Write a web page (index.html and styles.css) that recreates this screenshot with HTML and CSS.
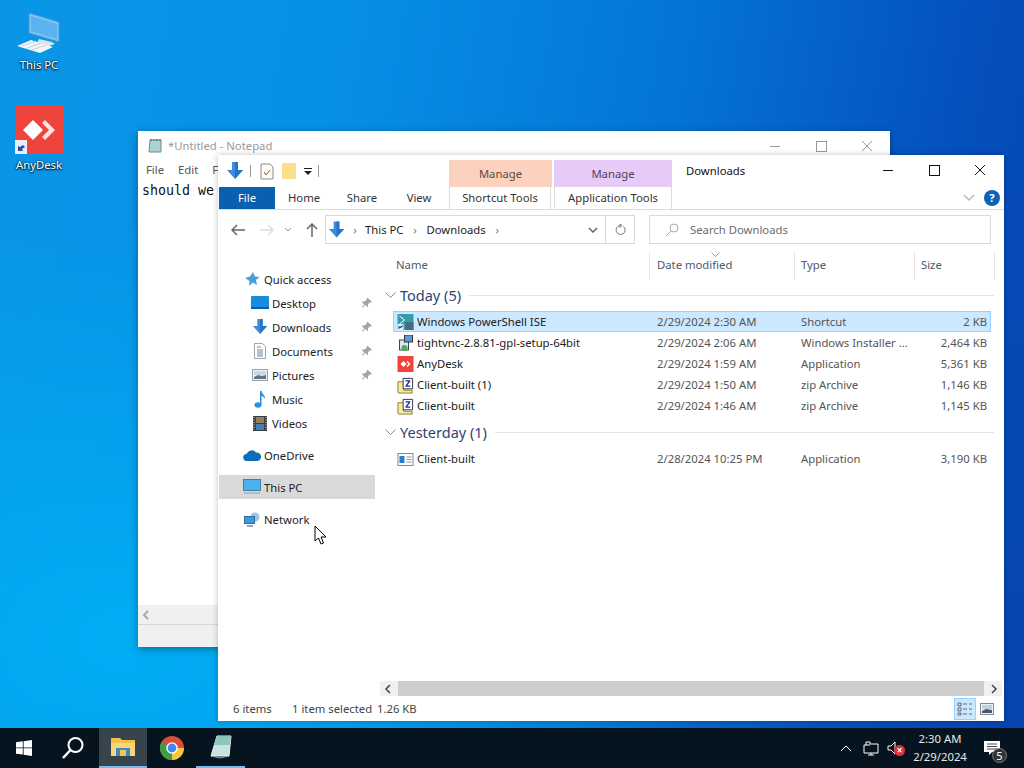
FILE: index.html
```html
<!DOCTYPE html>
<html>
<head>
<title>Downloads</title>
<link rel="stylesheet" href="styles.css">
</head>
<body>
<svg class="defs" width="0" height="0">
	<symbol id="dl" viewBox="0 0 18 18"><path d="M6 0h6v8h5l-8 9-8-9h5z" fill="#3a8ee0"/><path d="M9 0h3v8h5l-8 9z" fill="#2a72c4"/></symbol>
	<symbol id="pin" viewBox="0 0 12 12"><path d="M7 1l4 4-1 .5-1.500 0-1.500 2 0 2-1 .5-1.700-2.300L1.500 11l-.5-.5 2.300-3.300L1 5.500l.5-1h2l2-1.500V1.500z" fill="#a3a3a3"/></symbol>
	<symbol id="zip" viewBox="0 0 18 18"><path d="M1 5h6v9h9v3H2a1 1 0 0 1-1-1z" fill="#f5eaa0" stroke="#8a7a30"/><path d="M6.500 1.500h10v11h-10z" fill="#fff" stroke="#333"/><path d="M9 3.500h5v1.200L10.800 9H14v1.300H9V9l3.200-4.200H9z" fill="#2222b0"/></symbol>
</svg>
<div class="screen">
	<div class="wall">
		<div class="desk-icon icon-pc">
			<svg width="48" height="48" viewBox="0 0 48 48"><path d="M14 2l30 9v20L14 22z" fill="#7cc6f6" stroke="#4a94d0"/><path d="M16 5l26 8v15L16 20z" fill="#5bb2ee"/><path d="M24 28l13 3 3 2-6 2-12-3z" fill="#d9e6ee"/><path d="M2 35l14-6 22 7-13 6z" fill="#f2f6f8"/><path d="M7 35l14-5M12 37l14-5M17 39l14-5" stroke="#c2cfd9"/></svg>
			<span>This PC</span>
		</div>
		<div class="desk-icon icon-any">
			<div class="any-logo">
				<svg width="48" height="48" viewBox="0 0 48 48"><rect width="48" height="48" fill="#ef443b"/><path d="M18 14l10 10-10 10L8 24z" fill="#fff"/><path d="M30 14l10 10-10 10-3-3 7-7-7-7z" fill="#fff" opacity=".85"/><rect y="34" width="12" height="14" fill="#e8eef8"/><path d="M3 45v-5l2 1 3-2 2 2-3 2 1 2z" fill="#274f9f"/></svg>
			</div>
			<span>AnyDesk</span>
		</div>

		<div class="notepad">
			<div class="np-title">
				<svg width="16" height="16" viewBox="0 0 16 16"><path d="M3 2h11v12H2z" fill="#a9d4cf" stroke="#6c8c8c"/><path d="M4 1v2M7 1v2M10 1v2M13 1v2" stroke="#556"/></svg>
				<span class="np-name">*Untitled - Notepad</span>
				<div class="win-btns faded">
					<i class="btn-min"></i><i class="btn-max"></i>
					<svg width="46" height="12" viewBox="0 0 46 12"><path d="M18 1l10 10M28 1L18 11" stroke="#999" fill="none"/></svg>
				</div>
			</div>
			<div class="np-menu"><span>File</span><span>Edit</span><span>F</span></div>
			<div class="np-text">should we</div>
			<div class="np-scroll">
				<svg width="8" height="10" viewBox="0 0 8 10"><path d="M6 1L2 5l4 4" stroke="#aaa" stroke-width="2" fill="none"/></svg>
			</div>
			<div class="np-status"></div>
		</div>

		<div class="explorer">
			<div class="titlebar">
				<div class="qat">
					<svg width="18" height="18"><use href="#dl"/></svg>
					<b class="qat-sep"></b>
					<svg width="14" height="17" viewBox="0 0 14 17"><path d="M1 1h9l3 3v12H1z" fill="#fbfbf8" stroke="#8d8d85"/><path d="M4 9l2 3 4-5" stroke="#a05a40" fill="none"/></svg>
					<svg class="qat-folder" width="14" height="17" viewBox="0 0 14 17"><rect width="14" height="16" rx="1" fill="#fbe08a"/></svg>
					<svg class="qat-drop" width="8" height="8" viewBox="0 0 8 8"><path d="M0 1h8v1H0zM0 4h8L4 8z" fill="#222"/></svg>
					<b class="qat-sep"></b>
				</div>
				<div class="ctx ctx-orange">Manage</div>
				<div class="ctx ctx-purple">Manage</div>
				<div class="win-title">Downloads</div>
				<div class="win-btns">
					<i class="btn-min"></i><i class="btn-max"></i>
					<svg width="46" height="12" viewBox="0 0 46 12"><path d="M18 1l10 10M28 1L18 11" stroke="#111" fill="none"/></svg>
				</div>
			</div>
			<div class="tabs">
				<div class="tab tab-file">File</div>
				<div class="tab tab-home">Home</div>
				<div class="tab tab-share">Share</div>
				<div class="tab tab-view">View</div>
				<div class="tab tab-ctx1">Shortcut Tools</div>
				<div class="tab tab-ctx2">Application Tools</div>
				<div class="tabs-end">
					<svg width="12" height="8" viewBox="0 0 12 8"><path d="M1 1l5 5 5-5" stroke="#bbb" stroke-width="1.500" fill="none"/></svg>
					<span class="help">?</span>
				</div>
			</div>
			<div class="addr-row">
				<div class="nav-btns">
					<svg width="14" height="12" viewBox="0 0 14 12"><path d="M6 1L1 6l5 5M1 6h13" stroke="#666" stroke-width="1.500" fill="none"/></svg>
					<svg width="14" height="12" viewBox="0 0 14 12"><path d="M8 1l5 5-5 5M13 6H0" stroke="#ddd" stroke-width="1.500" fill="none"/></svg>
					<svg width="8" height="5" viewBox="0 0 8 5"><path d="M1 1l3 3 3-3" stroke="#999" fill="none"/></svg>
					<svg width="12" height="14" viewBox="0 0 12 14"><path d="M1 6l5-5 5 5M6 1v13" stroke="#666" stroke-width="1.500" fill="none"/></svg>
				</div>
				<div class="addr">
					<svg width="17" height="18"><use href="#dl"/></svg>
					<span class="crumb-arrow">&#8250;</span><span>This PC</span>
					<span class="crumb-arrow">&#8250;</span><span>Downloads</span>
					<span class="crumb-arrow">&#8250;</span>
					<svg class="addr-drop" width="10" height="6" viewBox="0 0 10 6"><path d="M1 1l4 4 4-4" stroke="#666" stroke-width="1.500" fill="none"/></svg>
					<div class="addr-refresh">
						<svg width="12" height="12" viewBox="0 0 12 12"><path d="M9.500 2.500A4.500 4.500 0 1 1 6 1.500M6 0v3.500l2-2z" stroke="#777" fill="none"/></svg>
					</div>
				</div>
				<div class="search">
					<svg width="14" height="14" viewBox="0 0 14 14"><circle cx="9" cy="5" r="4" stroke="#aaa" fill="none"/><path d="M6 8l-5 5" stroke="#aaa"/></svg>
					<span>Search Downloads</span>
				</div>
			</div>
			<div class="main">
				<div class="nav">
					<div class="nav-item top">
						<svg width="16" height="16" viewBox="0 0 16 16"><path d="M9 1l2 4.500 4.500.5-3.500 3 1 5L9 11.500 5 15l.5-5L1 7l5-1.500z" fill="#4a9edb"/></svg>
						<span>Quick access</span>
					</div>
					<div class="nav-item sub">
						<svg width="18" height="14" viewBox="0 0 18 14"><rect width="18" height="13" rx="1" fill="#1a8ce0"/><rect y="11" width="18" height="2" fill="#0d5ea8"/></svg>
						<span>Desktop</span><svg class="pin" width="12" height="12"><use href="#pin"/></svg>
					</div>
					<div class="nav-item sub">
						<svg width="16" height="16"><use href="#dl"/></svg>
						<span>Downloads</span><svg class="pin" width="12" height="12"><use href="#pin"/></svg>
					</div>
					<div class="nav-item sub">
						<svg width="14" height="16" viewBox="0 0 14 16"><path d="M1.500.5h8l3 3v12h-11z" fill="#fff" stroke="#98a8b8"/><path d="M4 4h4M4 7h6M4 9h6M4 11h6M4 13h6" stroke="#6f8296"/></svg>
						<span>Documents</span><svg class="pin" width="12" height="12"><use href="#pin"/></svg>
					</div>
					<div class="nav-item sub">
						<svg width="16" height="12" viewBox="0 0 16 12"><rect x=".5" y=".5" width="15" height="11" fill="#eef1f4" stroke="#95a1ac"/><path d="M2 8l4-2 4 1 4-1v4H2z" fill="#65727f"/><rect x="2" y="2" width="12" height="4" fill="#c7d8e6"/></svg>
						<span>Pictures</span><svg class="pin" width="12" height="12"><use href="#pin"/></svg>
					</div>
					<div class="nav-item sub">
						<svg width="12" height="17" viewBox="0 0 12 17"><ellipse cx="4" cy="14" rx="3.500" ry="2.800" fill="#2f8ee0"/><path d="M6 14V0h1.500c.5 3 4 4 3.500 8-1-2-2.500-3-3.500-3v9z" fill="#2f8ee0"/></svg>
						<span>Music</span>
					</div>
					<div class="nav-item sub">
						<svg width="14" height="15" viewBox="0 0 14 15"><rect width="14" height="15" fill="#3b3f45"/><rect x="3" y="1" width="8" height="6" fill="#9a7f52"/><rect x="3" y="8" width="8" height="6" fill="#3f7fc0"/><path d="M1 1v13M13 1v13" stroke="#ddd" stroke-dasharray="1 1.500"/></svg>
						<span>Videos</span>
					</div>
					<div class="nav-item top gap">
						<svg width="18" height="12" viewBox="0 0 18 12"><path d="M4 12a3.500 3.500 0 0 1-.5-7A5.500 5.500 0 0 1 13 3.500 4 4 0 0 1 14.500 12z" fill="#0f6cbd"/></svg>
						<span>OneDrive</span>
					</div>
					<div class="nav-item top gap selected">
						<svg width="18" height="16" viewBox="0 0 18 16"><rect x=".5" y=".5" width="17" height="11" fill="#4fb0ee" stroke="#3f7fae"/><path d="M1 13h16v2H1z" fill="#b4bcc4"/></svg>
						<span>This PC</span>
					</div>
					<div class="nav-item top gap">
						<svg width="16" height="15" viewBox="0 0 16 15"><circle cx="11" cy="5" r="4.500" fill="#9cc4e4"/><rect x=".5" y="4.500" width="10" height="7" fill="#3d9ad8" stroke="#2f6f9f"/><path d="M3 14h6" stroke="#6b8aa3" stroke-width="1.500"/></svg>
						<span>Network</span>
					</div>
				</div>
				<div class="content">
					<div class="cols">
						<div class="col col-name">Name</div>
						<div class="col col-date">Date modified<svg class="sort" width="9" height="5" viewBox="0 0 9 5"><path d="M.5.500l4 4 4-4" stroke="#999" fill="none"/></svg></div>
						<div class="col col-type">Type</div>
						<div class="col col-size">Size</div>
					</div>
					<div class="group">
						<svg width="11" height="7" viewBox="0 0 11 7"><path d="M.5.500l5 5 5-5" stroke="#888" fill="none"/></svg>
						<span>Today (5)</span><i></i>
					</div>
					<div class="row selected">
						<div class="cell-name">
							<svg width="16" height="16" viewBox="0 0 16 16"><rect width="16" height="16" fill="#2f9fb0"/><rect x="8" y="8" width="8" height="8" fill="#4a6a80"/><path d="M2 2l5 4-5 4" stroke="#fff" fill="none"/><rect y="10" width="6" height="6" fill="#e8eef8"/><path d="M1 15v-3l2 .5 2-1.500v2l-2 1z" fill="#274f9f"/></svg>
							<span>Windows PowerShell ISE</span>
						</div>
						<div>2/29/2024 2:30 AM</div><div>Shortcut</div><div class="cell-size">2 KB</div>
					</div>
					<div class="row">
						<div class="cell-name">
							<svg width="16" height="16" viewBox="0 0 16 16"><rect x="2" y="5" width="9" height="10" fill="#dfe6ea" stroke="#444"/><rect x="7" y="0" width="8" height="7" fill="#5a9bd8" stroke="#333"/><circle cx="7" cy="13" r="3" fill="#44b060"/></svg>
							<span>tightvnc-2.8.81-gpl-setup-64bit</span>
						</div>
						<div>2/29/2024 2:06 AM</div><div>Windows Installer ...</div><div class="cell-size">2,464 KB</div>
					</div>
					<div class="row">
						<div class="cell-name">
							<svg width="16" height="16" viewBox="0 0 16 16"><rect width="16" height="16" fill="#ef443b"/><path d="M6 5l3 3-3 3-3-3z" fill="#fff"/><path d="M10 5l3 3-3 3-1-1 2-2-2-2z" fill="#fff"/></svg>
							<span>AnyDesk</span>
						</div>
						<div>2/29/2024 1:59 AM</div><div>Application</div><div class="cell-size">5,361 KB</div>
					</div>
					<div class="row">
						<div class="cell-name"><svg width="17" height="17"><use href="#zip"/></svg><span>Client-built (1)</span></div>
						<div>2/29/2024 1:50 AM</div><div>zip Archive</div><div class="cell-size">1,146 KB</div>
					</div>
					<div class="row">
						<div class="cell-name"><svg width="17" height="17"><use href="#zip"/></svg><span>Client-built</span></div>
						<div>2/29/2024 1:46 AM</div><div>zip Archive</div><div class="cell-size">1,145 KB</div>
					</div>
					<div class="group yesterday">
						<svg width="11" height="7" viewBox="0 0 11 7"><path d="M.5.500l5 5 5-5" stroke="#888" fill="none"/></svg>
						<span>Yesterday (1)</span><i></i>
					</div>
					<div class="row">
						<div class="cell-name">
							<svg width="16" height="13" viewBox="0 0 16 13"><rect x=".5" y=".5" width="15" height="12" fill="#fff" stroke="#7f8c98"/><rect x="2" y="3" width="5" height="7" fill="#2c7cd0"/><path d="M9 4h5M9 6.500h5M9 9h5" stroke="#8a97a3"/></svg>
							<span>Client-built</span>
						</div>
						<div>2/28/2024 10:25 PM</div><div>Application</div><div class="cell-size">3,190 KB</div>
					</div>
					<div class="hscroll">
						<svg width="8" height="10" viewBox="0 0 8 10"><path d="M6 1L2 5l4 4" stroke="#444" stroke-width="1.500" fill="none"/></svg>
						<i></i>
						<svg width="8" height="10" viewBox="0 0 8 10"><path d="M2 1l4 4-4 4" stroke="#444" stroke-width="1.500" fill="none"/></svg>
					</div>
				</div>
			</div>
			<div class="status">
				<span class="st-items">6 items</span>
				<span class="st-sel">1 item selected</span>
				<span>1.26 KB</span>
				<div class="views">
					<div class="view-btn on">
						<svg width="16" height="14" viewBox="0 0 16 14"><path d="M1 1h3v3H1zM1 6h3v3H1zM1 11h3v2H1z" fill="none" stroke="#667"/><path d="M6 2h4M12 2h3M6 7h4M12 7h3M6 12h4M12 12h3" stroke="#667"/></svg>
					</div>
					<div class="view-btn">
						<svg width="14" height="12" viewBox="0 0 14 12"><rect x=".5" y=".5" width="13" height="11" fill="#eef1f4" stroke="#7f8c98"/><path d="M2 8l4-2 6 1v3H2z" fill="#556"/><rect x="2" y="2" width="10" height="4" fill="#bcd2e4"/></svg>
					</div>
				</div>
			</div>
		</div>

		<svg class="cursor" width="14" height="20" viewBox="0 0 14 20"><path d="M1 1v15l3.500-3 2.500 6 2.500-1-2.500-6H12z" fill="#fff" stroke="#000"/></svg>
	</div>

	<div class="taskbar">
		<div class="task start">
			<svg width="16" height="16" viewBox="0 0 16 16"><path d="M0 2.300l6.800-1v6.200H0zM7.600 1.200L16 0v7.500H7.600zM0 8.300h6.800v6.300L0 13.700zM7.600 8.300H16V16l-8.400-1.200z" fill="#fff"/></svg>
		</div>
		<div class="task">
			<svg width="24" height="24" viewBox="0 0 24 24"><circle cx="14.500" cy="9" r="7" stroke="#fff" stroke-width="2" fill="none"/><path d="M9.500 14L2 22" stroke="#fff" stroke-width="2.500"/></svg>
		</div>
		<div class="task active">
			<svg width="24" height="20" viewBox="0 0 24 20"><path d="M0 1h9l2 2h13v16H0z" fill="#f0bf4e"/><rect y="6" width="24" height="13" fill="#f7d679"/><rect x="5" y="11" width="14" height="8" fill="#3f88b8"/><rect x="9" y="13" width="6" height="6" fill="#f0c75e"/></svg>
		</div>
		<div class="task">
			<svg width="24" height="24" viewBox="0 0 24 24"><circle cx="12" cy="12" r="12" fill="#dd4b39"/><path d="M12 12L1.600 6A12 12 0 0 0 12 24l6-12z" fill="#3f9c46"/><path d="M12 12h12a12 12 0 0 1-12 12z" fill="#fcc934"/><circle cx="12" cy="12" r="5.800" fill="#fff"/><circle cx="12" cy="12" r="4.400" fill="#3f87ee"/></svg>
		</div>
		<div class="task running">
			<svg width="22" height="24" viewBox="0 0 22 24"><path d="M7 1h14l-2 20H1z" fill="#c8e4e0" stroke="#eef6f5"/><path d="M7 1h14l-1 9H4z" fill="#8fc3bd"/><path d="M1 21l9 2 9-2" stroke="#8aa" fill="none"/></svg>
		</div>
		<div class="tray">
			<svg width="12" height="7" viewBox="0 0 12 7"><path d="M1 6l5-5 5 5" stroke="#fff" fill="none"/></svg>
			<svg width="16" height="15" viewBox="0 0 16 15"><path d="M3 4V1h4v2h8v9H1V4h6" stroke="#fff" fill="none"/><path d="M5 14h6M8 12v2" stroke="#fff"/></svg>
			<div class="vol">
				<svg width="18" height="14" viewBox="0 0 18 14"><path d="M1 5h3l4-4v12L4 9H1z" stroke="#fff" fill="none"/></svg>
				<b>&#215;</b>
			</div>
			<div class="clock"><span>2:30 AM</span><span>2/29/2024</span></div>
			<div class="notif">
				<svg width="16" height="14" viewBox="0 0 16 14"><path d="M0 0h16v11H8l-3 3v-3H0z" fill="#fff"/><path d="M3 3h10M3 5.500h10M3 8h10" stroke="#445"/></svg>
				<b>5</b>
			</div>
		</div>
	</div>
</div>
</body>
</html>
```
FILE: styles.css
```css
html, body{
	margin:0;
	padding:0;
	overflow:hidden;
}
body{
	font-family:"Noto Sans", "Open Sans", sans-serif;
	font-size:11.3px;
	color:#222;
}
.defs{
	position:absolute;
}
.screen{
	width:1024px;
	height:768px;
	display:flex;
	flex-direction:column;
}
.wall{
	flex:1;
	position:relative;
	background:
		radial-gradient(ellipse 600px 420px at 120px 640px, #00aef4 0%, rgba(0,174,244,0) 100%),
		linear-gradient(100deg, #0a96e6 0%, #0690e6 30%, #0474d6 60%, #0550bd 85%, #0644ad 100%);
}

/* desktop icons */
.desk-icon{
	position:absolute;
	width:76px;
	display:flex;
	flex-direction:column;
	align-items:center;
	color:#fff;
	text-shadow:0 1px 2px #000, 0 0 2px #000;
}
.icon-pc{
	left:1px;
	top:11px;
}
.icon-any{
	left:1px;
	top:106px;
}
.any-logo{
	height:48px;
	margin-bottom:3px;
}
.icon-pc span{
	margin-top:-2px;
}

/* notepad behind */
.notepad{
	position:absolute;
	left:138px;
	top:131px;
	width:752px;
	height:516px;
	background:#fff;
	box-shadow:0 2px 8px rgba(0,0,0,.35);
	display:flex;
	flex-direction:column;
}
.np-title{
	height:29px;
	display:flex;
	align-items:center;
	padding-left:9px;
	color:#999;
}
.np-name{
	margin-left:5px;
}
.np-menu{
	height:22px;
	display:flex;
	padding:2px 0 0 8px;
	box-sizing:border-box;
	gap:14px;
	color:#555;
}
.np-text{
	flex:1;
	padding:0 4px;
	font-family:"DejaVu Sans Mono", monospace;
	font-size:13.3px;
	line-height:18px;
	color:#111;
}
.np-scroll{
	height:19px;
	background:#f0f0f0;
	display:flex;
	align-items:center;
	padding-left:4px;
}
.np-status{
	height:22px;
	background:#f0f0f0;
	border-top:1px solid #d6d6d6;
}
.win-btns{
	margin-left:auto;
	display:flex;
	align-items:center;
}
.btn-min, .btn-max{
	width:46px;
	height:12px;
	position:relative;
	display:block;
}
.btn-min:after{
	content:"";
	position:absolute;
	left:18px;
	top:6px;
	width:10px;
	height:1px;
	background:#111;
}
.btn-max:after{
	content:"";
	position:absolute;
	left:18px;
	top:1px;
	width:9px;
	height:9px;
	border:1px solid #111;
}
.faded .btn-min:after{
	background:#999;
}
.faded .btn-max:after{
	border-color:#999;
}

/* explorer */
.explorer{
	position:absolute;
	left:218px;
	top:155px;
	width:786px;
	height:566px;
	background:#fff;
	display:flex;
	flex-direction:column;
	box-shadow:0 0 6px rgba(0,0,0,.25);
}
.titlebar{
	height:32px;
	display:flex;
	align-items:flex-end;
}
.qat{
	width:231px;
	height:32px;
	display:flex;
	align-items:center;
	padding-left:8px;
	box-sizing:border-box;
}
.qat-sep{
	width:1px;
	height:12px;
	background:#999;
	margin:0 9px 0 6px;
}
.qat-folder{
	margin-left:8px;
}
.qat-drop{
	margin-left:8px;
}
.ctx{
	height:27px;
	display:flex;
	align-items:center;
	justify-content:center;
	color:#5d4a40;
}
.ctx-orange{
	width:103px;
	background:#fcd1bd;
}
.ctx-purple{
	width:118px;
	margin-left:2px;
	background:#e6cbf8;
	color:#54405f;
}
.win-title{
	margin-left:14px;
	height:32px;
	line-height:31px;
	color:#111;
}
.titlebar .win-btns{
	height:30px;
	margin-right:1px;
	align-self:flex-start;
}
.tabs{
	height:23px;
	display:flex;
	border-bottom:1px solid #dcdcdc;
	box-sizing:border-box;
	line-height:22px;
	color:#333;
}
.tab{
	text-align:center;
}
.tab-file{
	width:56px;
	margin-left:1px;
	background:#0a5fb0;
	color:#fff;
}
.tab-home{
	width:58px;
}
.tab-share{
	width:58px;
}
.tab-view{
	width:56px;
}
.tab-ctx1{
	width:102px;
	margin-left:2px;
	border-left:1px solid #ddd;
	border-right:1px solid #ddd;
	box-sizing:border-box;
}
.tab-ctx2{
	width:118px;
	margin-left:3px;
	border-left:1px solid #ddd;
	border-right:1px solid #ddd;
	box-sizing:border-box;
}
.tabs-end{
	margin-left:auto;
	display:flex;
	align-items:center;
	gap:9px;
	padding-right:4px;
}
.help{
	width:16px;
	height:16px;
	border-radius:50%;
	background:#0a63b4;
	color:#fff;
	font-weight:bold;
	text-align:center;
	line-height:16px;
}
.addr-row{
	height:42px;
	display:flex;
	align-items:flex-start;
	padding-top:5px;
	box-sizing:border-box;
}
.nav-btns{
	width:107px;
	height:29px;
	display:flex;
	align-items:center;
	padding-left:13px;
	box-sizing:border-box;
}
.nav-btns svg:nth-child(2){
	margin-left:15px;
}
.nav-btns svg:nth-child(3){
	margin-left:10px;
}
.nav-btns svg:nth-child(4){
	margin-left:14px;
}
.addr{
	width:310px;
	height:29px;
	border:1px solid #d9d9d9;
	box-sizing:border-box;
	display:flex;
	align-items:center;
	padding-left:2px;
	color:#222;
}
.crumb-arrow{
	width:23px;
	text-align:center;
	color:#777;
}
.addr .crumb-arrow:nth-of-type(1){
	width:20px;
}
.addr-drop{
	margin-left:auto;
}
.addr-refresh{
	width:28px;
	height:27px;
	margin-left:7px;
	border-left:1px solid #d9d9d9;
	display:flex;
	align-items:center;
	justify-content:center;
}
.search{
	width:342px;
	height:29px;
	margin-left:14px;
	border:1px solid #d9d9d9;
	box-sizing:border-box;
	display:flex;
	align-items:center;
	padding-left:15px;
	gap:11px;
	color:#6d6d6d;
}
.main{
	flex:1;
	display:flex;
	min-height:0;
}
.nav{
	width:160px;
	padding:15px 3px 0 1px;
	box-sizing:border-box;
	display:flex;
	flex-direction:column;
}
.nav-item{
	height:24px;
	display:flex;
	align-items:center;
	flex-shrink:0;
	color:#222;
}
.nav-item svg:first-child{
	width:18px;
	flex-shrink:0;
}
.nav-item span{
	margin-left:3px;
}
.nav-item.top{
	padding-left:24px;
}
.nav-item.sub{
	padding-left:32px;
}
.nav-item.gap{
	margin-top:8px;
}
.nav-item.selected{
	background:#d9d9d9;
}
.pin{
	margin-left:auto;
	margin-right:2px;
}
.content{
	flex:1;
	position:relative;
	padding-left:2px;
}
.cols{
	height:28px;
	display:grid;
	grid-template-columns:270px 145px 120px 80px;
	color:#4d5a6b;
	line-height:25px;
}
.col{
	position:relative;
	padding-left:7px;
	border-right:1px solid #e5e5e5;
	box-sizing:border-box;
}
.col-name{
	padding-left:16px;
}
.col-type{
	padding-left:6px;
}
.col-size{
	padding-left:6px;
}
.sort{
	position:absolute;
	left:61px;
	top:0;
}
.group{
	height:30px;
	margin-top:1px;
	margin-left:5px;
	margin-right:10px;
	padding-bottom:2px;
	box-sizing:border-box;
	display:flex;
	align-items:center;
	color:#2f4177;
	font-size:14.5px;
}
.group span{
	margin:0 8px 0 4px;
}
.group i{
	flex:1;
	height:1px;
	background:#e2e2e2;
}
.yesterday{
	margin-top:2px;
}
.row{
	height:21px;
	margin-left:13px;
	margin-right:13px;
	box-sizing:border-box;
	display:grid;
	grid-template-columns:263px 144px 112px 1fr;
	line-height:20px;
	color:#555;
	border:1px solid transparent;
	white-space:nowrap;
}
.row.selected{
	background:#cce8ff;
	border-color:#99d1ff;
}
.cell-name{
	display:flex;
	align-items:center;
	gap:3px;
	padding-left:3px;
	color:#222;
}
.cell-name svg{
	width:17px;
	flex-shrink:0;
}
.cell-size{
	text-align:right;
	padding-right:3px;
}
.hscroll{
	position:absolute;
	left:2px;
	right:2px;
	bottom:0;
	height:15px;
	display:flex;
	align-items:center;
	padding:0 4px;
	gap:6px;
	box-sizing:border-box;
	background:#f0f0f0;
}
.hscroll i{
	flex:1;
	height:15px;
	background:#cdcdcd;
}
.status{
	height:25px;
	display:flex;
	align-items:center;
	padding-left:15px;
	color:#444;
	white-space:nowrap;
}
.st-items{
	width:59px;
}
.st-sel{
	width:85px;
}
.views{
	margin-left:auto;
	display:flex;
	margin-right:6px;
}
.view-btn{
	width:22px;
	height:22px;
	box-sizing:border-box;
	display:flex;
	align-items:center;
	justify-content:center;
}
.view-btn.on{
	background:#cce8ff;
	border:1px solid #99d1ff;
}
.cursor{
	position:absolute;
	left:314px;
	top:525px;
}

/* taskbar */
.taskbar{
	height:40px;
	background:#06141f;
	display:flex;
	color:#fff;
}
.task{
	width:49px;
	height:40px;
	display:flex;
	align-items:center;
	justify-content:center;
	box-sizing:border-box;
}
.task.start{
	width:48px;
}
.task.active{
	width:48px;
	margin-left:2px;
	background:#37444c;
	border-bottom:2px solid #76b9ed;
}
.task.running{
	border-bottom:2px solid #76b9ed;
}
.tray{
	margin-left:auto;
	display:flex;
	align-items:center;
	padding-right:10px;
}
.tray > svg:nth-child(2){
	margin-left:11px;
}
.vol{
	position:relative;
	width:18px;
	height:14px;
	margin-left:8px;
}
.vol b{
	position:absolute;
	left:7px;
	top:4px;
	width:11px;
	height:11px;
	border-radius:50%;
	background:#d8343a;
	font-size:10px;
	line-height:11px;
	text-align:center;
}
.clock{
	width:60px;
	margin-left:5px;
	display:flex;
	flex-direction:column;
	align-items:center;
	line-height:18px;
	color:#e8e8e8;
}
.notif{
	position:relative;
	width:44px;
	height:40px;
	display:flex;
	justify-content:center;
	align-items:center;
}
.notif b{
	position:absolute;
	left:22px;
	top:20px;
	width:15px;
	height:15px;
	border-radius:50%;
	background:#333;
	border:1px solid #777;
	box-sizing:border-box;
	font-weight:normal;
	font-size:11px;
	line-height:13px;
	text-align:center;
}
```
